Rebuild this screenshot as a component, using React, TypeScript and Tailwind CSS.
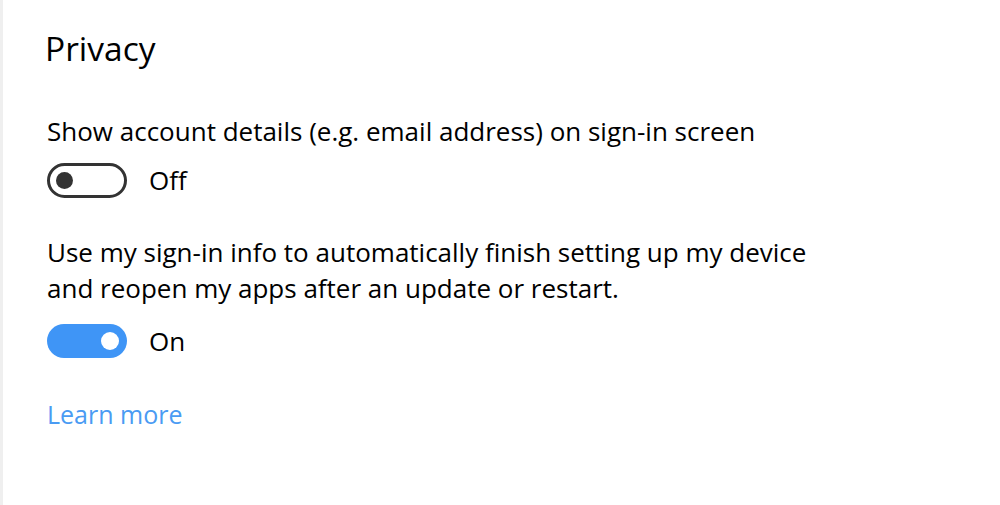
import React from "react";

function Toggle({ on }: { on: boolean }) {
  if (on) {
    return (
      <div className="w-[80px] h-[34px] rounded-full bg-[#3f95f6] flex items-center justify-end pr-[8px]">
        <div className="w-[18px] h-[18px] rounded-full bg-white" />
      </div>
    );
  }
  return (
    <div className="w-[80px] h-[35px] rounded-full border-[3px] border-[#333333] bg-white flex items-center pl-[6px]">
      <div className="w-[17px] h-[17px] rounded-full bg-[#333333]" />
    </div>
  );
}

export default function App() {
  return (
    <div className="w-[1000px] h-[505px] bg-white flex font-['Open_Sans',sans-serif] text-black overflow-hidden">
      <div className="w-[3px] h-full bg-[#efefef]" />
      <div className="pl-[42px] pt-[24px] flex flex-col">
        <h1 className="text-[33.5px] leading-[48px] m-0 font-normal">Privacy</h1>
        <p className="mt-[41px] text-[26px] leading-[36px] pl-[2px]">Show account details (e.g. email address) on sign-in screen</p>
        <div className="mt-[13px] flex items-center gap-[22px] pl-[2px]">
          <Toggle on={false} />
          <span className="text-[26px] leading-[36px]">Off</span>
        </div>
        <p className="mt-[36px] text-[26px] leading-[36px] w-[850px] pl-[2px]">
          Use my sign-in info to automatically finish setting up my device
          <br />
          and reopen my apps after an update or restart.
        </p>
        <div className="mt-[17px] flex items-center gap-[22px] pl-[2px]">
          <Toggle on={true} />
          <span className="text-[26px] leading-[36px]">On</span>
        </div>
        <a className="mt-[37px] text-[25px] leading-[36px] text-[#4a9bf3] pl-[2px]">Learn more</a>
      </div>
    </div>
  );
}
